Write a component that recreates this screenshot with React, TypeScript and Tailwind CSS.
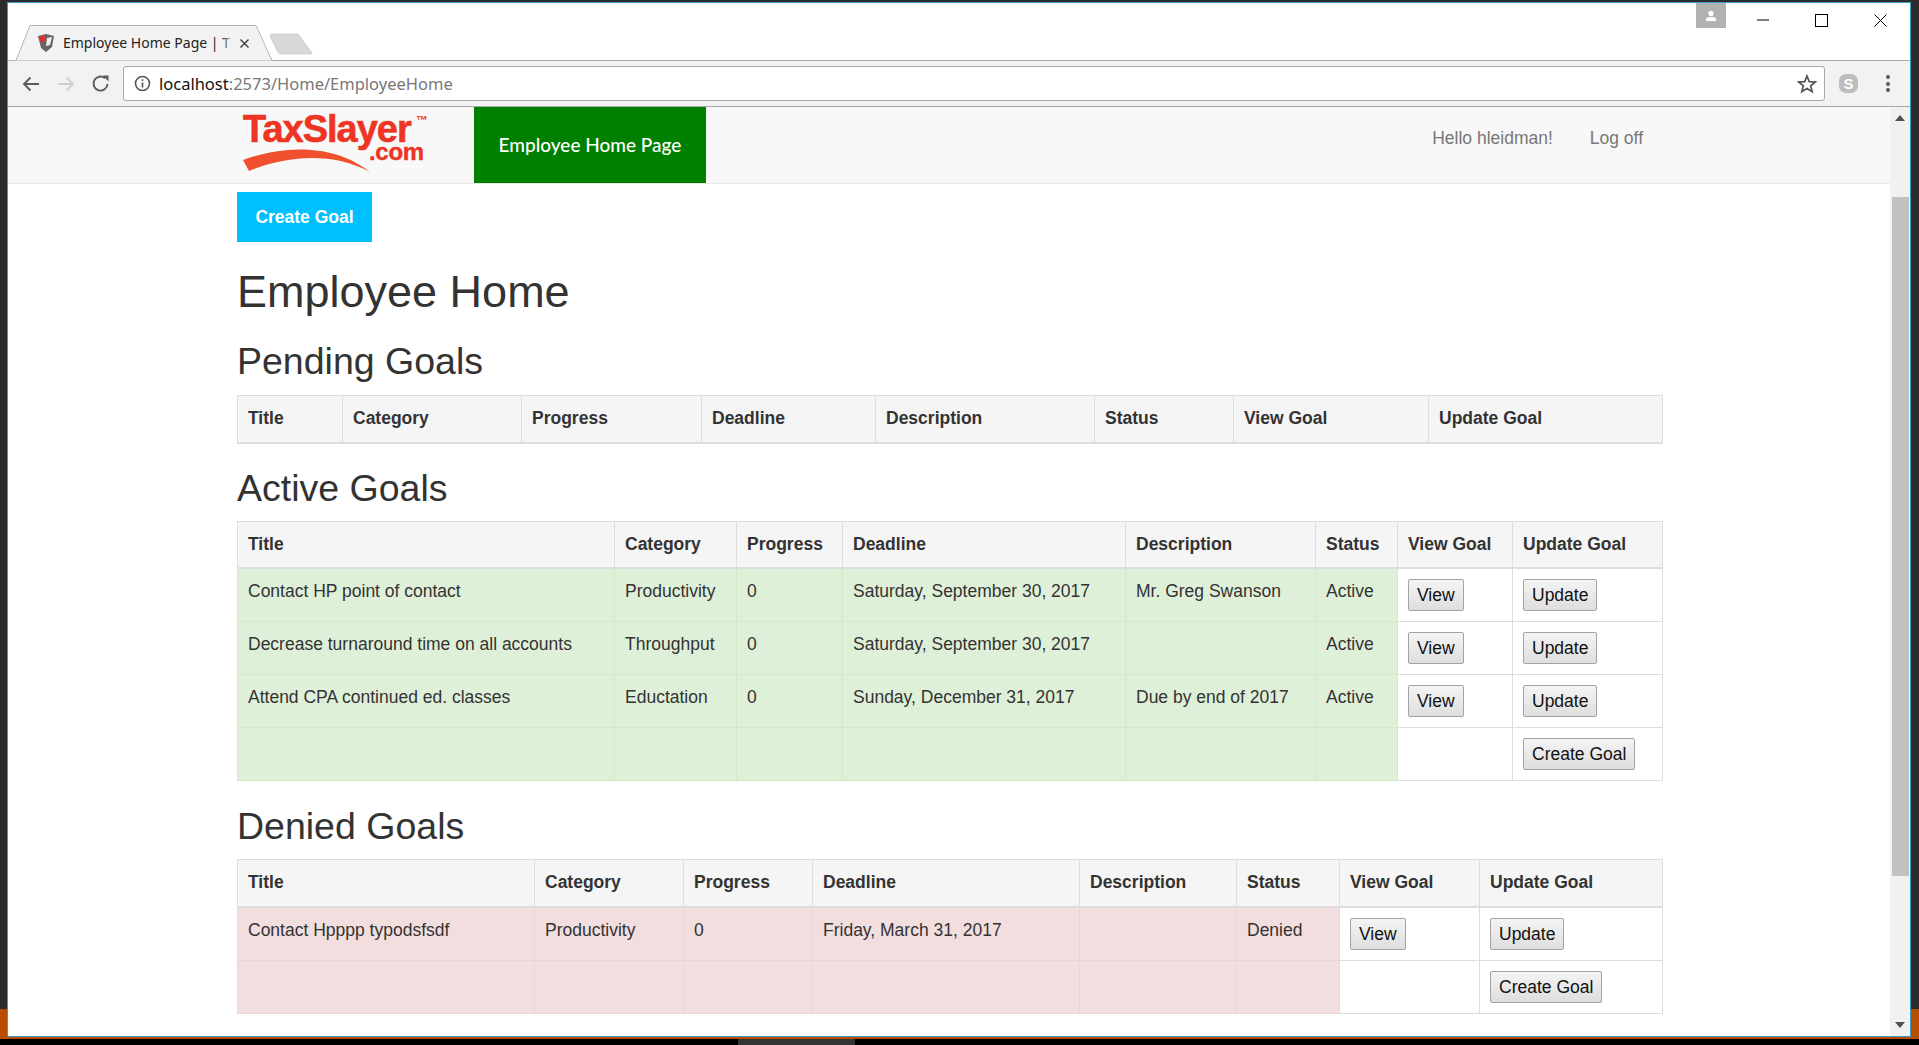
import React from "react";

function Btn({ children }: { children: React.ReactNode }) {
  return (
    <button className="h-[32px] px-[8px] border border-[#a3a3a3] rounded-[2px] bg-gradient-to-b from-[#f4f4f4] to-[#dedede] text-[#111] text-[17.5px] leading-[20px] align-top">
      {children}
    </button>
  );
}

type Row = { cells: string[]; view?: boolean; create?: boolean };

function GoalTable({ widths, rows, tone }: { widths: number[]; rows: Row[]; tone?: "green" | "red" }) {
  const heads = ["Title", "Category", "Progress", "Deadline", "Description", "Status", "View Goal", "Update Goal"];
  const bg = tone === "green" ? "bg-[#dff0d8] border-[#d6e9c6]" : "bg-[#f2dede] border-[#ebd5d7]";
  return (
    <table className="table-fixed border-collapse w-[1425px] text-[17.5px] leading-[25px] text-[#333]">
      <colgroup>
        {widths.map((w, i) => (
          <col key={i} style={{ width: w }} />
        ))}
      </colgroup>
      <thead>
        <tr className="bg-[#f5f5f5]">
          {heads.map((h) => (
            <th key={h} className="border border-[#ddd] border-b-[2px] h-[47px] px-[10px] text-left font-bold align-middle">
              {h}
            </th>
          ))}
        </tr>
      </thead>
      <tbody>
        {rows.map((r, i) => (
          <tr key={i} className="h-[53px]">
            {r.cells.map((c, j) => (
              <td key={j} className={`border ${bg} px-[10px] pt-[10px] pb-[6px] align-top`}>
                {c}
              </td>
            ))}
            <td className="border border-[#ddd] px-[10px] py-[10px] align-top">{r.view ? <Btn>View</Btn> : null}</td>
            <td className="border border-[#ddd] px-[10px] py-[10px] align-top">
              <Btn>{r.create ? "Create Goal" : "Update"}</Btn>
            </td>
          </tr>
        ))}
      </tbody>
    </table>
  );
}

function Logo() {
  return (
    <div className="relative w-[190px] h-[76px] ml-[6px] font-['Liberation_Sans',sans-serif] text-[#ee3524]">
      <span className="absolute left-0 top-[4px] text-[38px] leading-[36px] font-bold tracking-[-1px] [-webkit-text-stroke:0.6px_#ee3524] whitespace-nowrap">
        TaxSlayer
      </span>
      <span className="absolute left-[173px] top-[7px] text-[12px] leading-[12px] font-bold">™</span>
      <span className="absolute left-[126px] top-[33px] text-[24px] leading-[24px] font-bold tracking-[-0.3px] [-webkit-text-stroke:0.4px_#ee3524]">
        .com
      </span>
      <svg className="absolute left-0 top-0" width="190" height="76" viewBox="0 0 190 76">
        <path d="M0 53 C30 42 85 32 127 65 C90 45 45 48 6 64 Z" fill="#f0502e" />
      </svg>
    </div>
  );
}

export default function App() {
  const green: Row[] = [
    { cells: ["Contact HP point of contact", "Productivity", "0", "Saturday, September 30, 2017", "Mr. Greg Swanson", "Active"], view: true },
    { cells: ["Decrease turnaround time on all accounts", "Throughput", "0", "Saturday, September 30, 2017", "", "Active"], view: true },
    { cells: ["Attend CPA continued ed. classes", "Eductation", "0", "Sunday, December 31, 2017", "Due by end of 2017", "Active"], view: true },
    { cells: ["", "", "", "", "", ""], create: true },
  ];
  const red: Row[] = [
    { cells: ["Contact Hpppp typodsfsdf", "Productivity", "0", "Friday, March 31, 2017", "", "Denied"], view: true },
    { cells: ["", "", "", "", "", ""], create: true },
  ];
  return (
    <div className="w-[1919px] h-[1045px] overflow-hidden flex flex-col bg-black font-['Liberation_Sans',sans-serif]">
      <div className="flex h-[1039px] shrink-0 bg-[#b84d00]">
        <div className="w-[7px] flex flex-col">
          <div className="h-[1009px] bg-[#2b2b2d]" />
        </div>
        <div className="w-[1904px] flex flex-col">
          <div className="h-[2px] shrink-0 bg-[#2b2b2d]" />
          <div className="h-[1035px] flex flex-col border border-[#3a9cc4] bg-white">
            {/* tab strip */}
            <div className="h-[58px] bg-white relative shrink-0 border-b border-[#aaaaaa]">
              <svg className="absolute left-0 top-[22px]" width="270" height="36" viewBox="0 0 270 36">
                <path d="M0 35.5 L8 35.5 L22 0.5 L248 0.5 L264 35.5" fill="#f2f2f2" stroke="#b5b5b5" />
              </svg>
              <svg className="absolute left-[29px] top-[30px]" width="18" height="20" viewBox="0 0 18 20">
                <path d="M1 3 L9 1 L17 3 L15 14 L9 19 L4 15 Z" fill="#666" />
                <path d="M2 4 L8 2 L9 8 L3 9 Z" fill="#d33" />
                <path d="M10 5 L15 4 L13 12 L9 13 Z" fill="#eee" />
              </svg>
              <div className="absolute left-[55px] top-[29px] w-[172px] whitespace-nowrap font-['Noto_Sans',sans-serif] text-[14px] leading-[22px] text-[#222]">
                Employee Home Page | T
                <div className="absolute right-0 top-0 w-[14px] h-[22px] bg-gradient-to-r from-transparent to-[#f2f2f2]" />
              </div>
              <svg className="absolute left-[231px] top-[35px]" width="11" height="11" viewBox="0 0 11 11" stroke="#444" strokeWidth="1.5">
                <path d="M1.5 1.5 L9.5 9.5 M9.5 1.5 L1.5 9.5" />
              </svg>
              <svg className="absolute left-[261px] top-[30px]" width="44" height="22" viewBox="0 0 44 22">
                <path d="M3 1 L29 1 L43 20 Q43 21 41 21 L12 21 Q10 21 9 19 L1 3 Q1 1 3 1 Z" fill="#d8d8d8" stroke="#cfcfcf" />
              </svg>
              <div className="absolute right-[184px] top-0 w-[30px] h-[25px] bg-[#b2b2b2] flex items-center justify-center">
                <svg width="12" height="12" viewBox="0 0 12 12" fill="#fff">
                  <circle cx="6" cy="3.4" r="2.6" />
                  <path d="M1 11 V9 Q1 7 6 7 Q11 7 11 9 V11 Z" />
                </svg>
              </div>
              <svg className="absolute right-[141px] top-[16px]" width="12" height="2" viewBox="0 0 12 2" stroke="#000">
                <path d="M0 1 H12" />
              </svg>
              <svg className="absolute right-[82px] top-[11px]" width="13" height="13" viewBox="0 0 13 13" fill="none" stroke="#000">
                <rect x="0.5" y="0.5" width="12" height="12" />
              </svg>
              <svg className="absolute right-[23px] top-[11px]" width="13" height="13" viewBox="0 0 13 13" stroke="#000">
                <path d="M0.5 0.5 L12.5 12.5 M12.5 0.5 L0.5 12.5" />
              </svg>
            </div>
            {/* toolbar */}
            <div className="h-[46px] shrink-0 bg-[#f2f2f2] border-b border-[#a9a9a9] flex items-center">
              <svg className="ml-[13px]" width="20" height="20" viewBox="0 0 20 20" fill="none" stroke="#5a5a5a" strokeWidth="1.8">
                <path d="M18 10 H3 M9.5 3.5 L3 10 L9.5 16.5" />
              </svg>
              <svg className="ml-[15px]" width="20" height="20" viewBox="0 0 20 20" fill="none" stroke="#cfcfcf" strokeWidth="1.8">
                <path d="M2 10 H17 M10.5 3.5 L17 10 L10.5 16.5" />
              </svg>
              <svg className="ml-[15px]" width="20" height="20" viewBox="0 0 20 20" fill="none" stroke="#5a5a5a" strokeWidth="1.9">
                <path d="M16.5 10 A7 7 0 1 1 14 4.2" />
                <path d="M12 1.5 L17.5 1.5 L17.5 7.5 Z" fill="#5a5a5a" stroke="none" />
              </svg>
              <div className="ml-[12px] w-[1702px] h-[35px] bg-white border border-[#a9a9a9] rounded-[3px] flex items-center">
                <svg className="ml-[10px]" width="17" height="17" viewBox="0 0 17 17" fill="none" stroke="#555" strokeWidth="1.6">
                  <circle cx="8.5" cy="8.5" r="7" />
                  <path d="M8.5 7.5 V12.5 M8.5 4.2 V6" />
                </svg>
                <span className="ml-[8px] pt-[2px] font-['Noto_Sans',sans-serif] text-[16.5px] text-[#111]">
                  localhost<span className="text-[#777]">:2573/Home/EmployeeHome</span>
                </span>
                <svg className="ml-auto mr-[7px]" width="20" height="20" viewBox="0 0 20 20" fill="none" stroke="#555" strokeWidth="1.7">
                  <path d="M10 2 L12.3 7.6 L18.3 8 L13.7 11.9 L15.2 17.8 L10 14.6 L4.8 17.8 L6.3 11.9 L1.7 8 L7.7 7.6 Z" />
                </svg>
              </div>
              <div className="ml-[14px] w-[19px] h-[19px] rounded-[7px] bg-[#bdbdbd] flex items-center justify-center text-white text-[15px] leading-[19px] font-bold">
                S
              </div>
              <div className="ml-[28px] flex flex-col gap-[2.5px]">
                <div className="w-[4px] h-[4px] rounded-full bg-[#5a5a5a]" />
                <div className="w-[4px] h-[4px] rounded-full bg-[#5a5a5a]" />
                <div className="w-[4px] h-[4px] rounded-full bg-[#5a5a5a]" />
              </div>
            </div>
            {/* page */}
            <div className="flex-1 flex min-h-0">
              <div className="flex-1 min-w-0 overflow-hidden">
                <nav className="h-[77px] bg-[#f8f8f8] border-b border-[#e7e7e7] flex pl-[229px]">
                  <Logo />
                  <div className="ml-[41px] w-[232px] h-[76px] bg-[#008000] text-white flex items-center justify-center font-['Lato',sans-serif] font-medium text-[19px]">
                    Employee Home Page
                  </div>
                  <div className="ml-auto mr-[247px] flex gap-[37px] pt-[19px] text-[17.5px] leading-[25px] text-[#777]">
                    <span>Hello hleidman!</span>
                    <span>Log off</span>
                  </div>
                </nav>
                <div className="pl-[229px]">
                  <button className="mt-[8px] w-[135px] h-[50px] bg-[#00bfff] text-white font-bold text-[17.5px]">Create Goal</button>
                  <h1 className="mt-[25px] text-[45px] leading-[50px] text-[#333]">Employee Home</h1>
                  <h2 className="mt-[23px] mb-[13px] text-[37.5px] leading-[42px] text-[#333]">Pending Goals</h2>
                  <GoalTable widths={[105, 179, 180, 174, 219, 139, 195, 234]} rows={[]} />
                  <h2 className="mt-[23px] mb-[12px] text-[37.5px] leading-[42px] text-[#333]">Active Goals</h2>
                  <GoalTable widths={[377, 122, 106, 283, 190, 82, 115, 150]} rows={green} tone="green" />
                  <h2 className="mt-[24px] mb-[12px] text-[37.5px] leading-[42px] text-[#333]">Denied Goals</h2>
                  <GoalTable widths={[297, 149, 129, 267, 157, 103, 140, 183]} rows={red} tone="red" />
                </div>
              </div>
              <div className="w-[20px] shrink-0 bg-[#f1f1f1] flex flex-col">
                <svg className="mt-[8px] ml-[5px]" width="10" height="6" viewBox="0 0 10 6" fill="#505050"><path d="M5 0 L10 6 H0 Z" /></svg>
                <div className="mt-[76px] ml-[2px] w-[17px] h-[679px] bg-[#c1c1c1]" />
                <div className="flex-1" />
                <svg className="mb-[8px] ml-[5px]" width="10" height="6" viewBox="0 0 10 6" fill="#505050"><path d="M0 0 H10 L5 6 Z" /></svg>
              </div>
            </div>
          </div>
        </div>
        <div className="w-[8px] flex flex-col">
          <div className="h-[1009px] bg-[#2b2b2d]" />
        </div>
      </div>
      <div className="flex-1 flex bg-black">
        <div className="ml-[738px] w-[117px] bg-[#333]" />
      </div>
    </div>
  );
}
